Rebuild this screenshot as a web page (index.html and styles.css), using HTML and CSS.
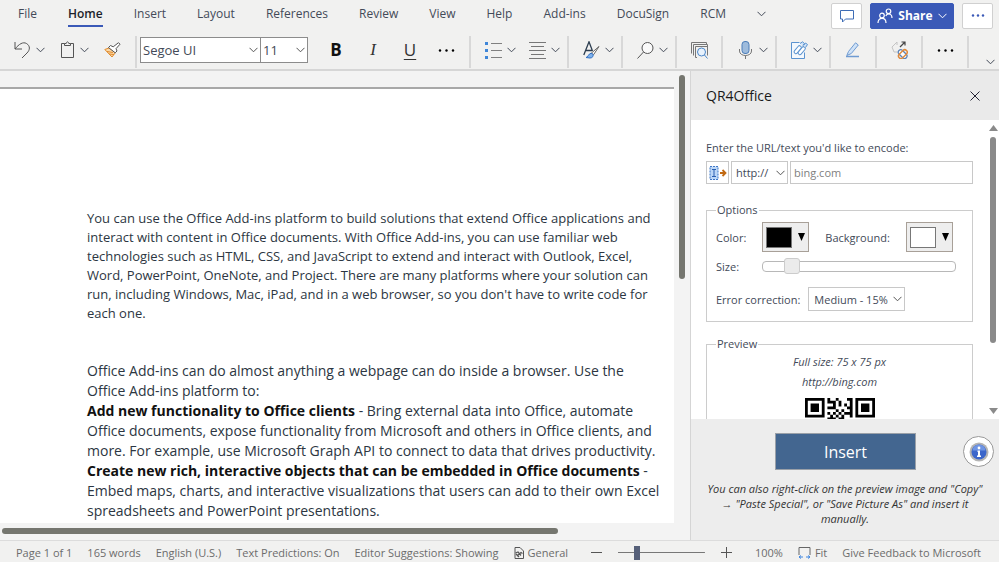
FILE: index.html
```
<!DOCTYPE html>
<html lang="en">
<head>
  <meta charset="UTF-8">
  <title>QR4Office</title>
  <link rel="stylesheet" href="styles.css">
</head>
<body>

  <!-- Shared icons -->
  <svg class="defs" width="0" height="0">
    <symbol id="chev" viewBox="0 0 9 6"><path d="M.5 .8 4.5 4.8 8.5 .8" fill="none" stroke="currentColor"/></symbol>
    <symbol id="dots" viewBox="0 0 17 5"><circle cx="2" cy="2.5" r="1.2"/><circle cx="8.5" cy="2.5" r="1.2"/><circle cx="15" cy="2.5" r="1.2"/></symbol>
  </svg>

  <!-- Ribbon -->
  <header>
    <div class="tabs-row">
      <nav class="tabs">
        <a href="#">File</a>
        <a href="#" class="active">Home</a>
        <a href="#">Insert</a>
        <a href="#">Layout</a>
        <a href="#">References</a>
        <a href="#">Review</a>
        <a href="#">View</a>
        <a href="#">Help</a>
        <a href="#">Add-ins</a>
        <a href="#">DocuSign</a>
        <a href="#">RCM</a>
        <button aria-label="More tabs"><svg class="chev"><use href="#chev"/></svg></button>
      </nav>
      <div class="actions">
        <button class="action" aria-label="Comments">
          <svg width="16" height="14" viewBox="0 0 16 14" fill="none" stroke="#3f6db5"><path d="M1.5 1.5h13v8.500H6.500L3.500 13v-3h-2z"/></svg>
        </button>
        <button class="action share">
          <svg width="16" height="16" viewBox="0 0 16 16" fill="none" stroke="#fff" stroke-width="1.200"><circle cx="5" cy="7.500" r="2.300"/><path d="M1 15c0-3 1.500-4.700 4-4.700S9 12 9 15"/><circle cx="11.500" cy="3.300" r="2.300"/><path d="M8.800 8c.5-1.300 1.400-2 2.700-2 2 0 3.500 1.500 3.500 4"/></svg>
          Share
          <svg class="chev"><use href="#chev"/></svg>
        </button>
        <button class="action dots" aria-label="More options">
          <svg width="14" height="3"><circle cx="2" cy="1.500" r="1.200"/><circle cx="7" cy="1.500" r="1.200"/><circle cx="12" cy="1.500" r="1.200"/></svg>
        </button>
      </div>
    </div>

    <div class="toolbar">
      <div class="group first">
        <button aria-label="Undo">
          <svg width="17" height="18" viewBox="0 0 17 18" fill="none" stroke="#555"><path d="M1 1v7h7M1 8C5 3 9 .5 12.500 2.500c4 2.500 3.500 6.500.5 9.500l-5 5"/></svg>
          <svg class="chev"><use href="#chev"/></svg>
        </button>
        <button aria-label="Paste">
          <svg width="15" height="18" viewBox="0 0 15 18" fill="none" stroke="#555"><path d="M4.500 2.500h-3v14h12v-14h-3"/><path d="M4.500 4.500v-2h1.700C6.500.3 8.500.3 8.800 2.500h1.700v2z"/></svg>
          <svg class="chev"><use href="#chev"/></svg>
        </button>
        <button aria-label="Format painter">
          <svg width="17" height="16" viewBox="0 0 17 16" fill="none" stroke="#555"><path d="M.8 7.500 5 6l6.500 4.500L8 15z" fill="#fbd9a8" stroke="#e08a2c"/><path d="M3 9.500l6 1M5 12l5 .5" stroke="#e08a2c"/><path d="M4.500 5.500l2-2 2.700 1.300L14.500.7l1.500 1.500-4 4.500 1 2.300-1.800 1.800z" fill="#fff"/></svg>
        </button>
      </div>

      <div class="group fonts">
        <div class="combos">
          <select class="font-name" aria-label="Font"><option>Segoe UI</option></select>
          <select class="font-size" aria-label="Font size"><option>11</option></select>
        </div>
        <button class="letter bold" aria-label="Bold">B</button>
        <button class="letter italic" aria-label="Italic">I</button>
        <button class="letter underline" aria-label="Underline">U</button>
        <button aria-label="More font options"><svg width="17" height="5"><use href="#dots"/></svg></button>
      </div>

      <div class="group pair">
        <button aria-label="Bullets">
          <svg width="17" height="17" viewBox="0 0 17 17"><path d="M0 0h3v3H0zM0 7h3v3H0zM0 14h3v3H0z" fill="#3f86d8"/><path d="M6 1.500h11M6 8.500h11M6 15.500h11" stroke="#808080"/></svg>
          <svg class="chev"><use href="#chev"/></svg>
        </button>
        <button aria-label="Alignment">
          <svg width="17" height="17" viewBox="0 0 17 17"><path d="M0 .5h17M2 4.500h13M0 8.500h17M2 12.500h13M0 16.500h17" stroke="#777"/></svg>
          <svg class="chev"><use href="#chev"/></svg>
        </button>
      </div>

      <div class="group">
        <button aria-label="Styles">
          <svg width="17" height="18" viewBox="0 0 17 18" fill="none" stroke="#2d3e50"><path d="M.8 14 6 .8 9.500 10M3 9.500h6" stroke-width="1.300"/><path d="M16 5.500 8.500 12l2 1.800z" fill="#fff" stroke="#666"/><path d="M3 16.500c2 0 2.500-4 5-4.200 3 0 3 4.700-1 4.700z" fill="#7fb2ec" stroke="#2f6fc4"/></svg>
          <svg class="chev"><use href="#chev"/></svg>
        </button>
      </div>
      <div class="group">
        <button aria-label="Find">
          <svg width="17" height="17" viewBox="0 0 17 17" fill="none" stroke="#555"><circle cx="10.500" cy="6" r="5.500" fill="#fafafa"/><path d="M6.500 10 .5 16.500"/></svg>
          <svg class="chev"><use href="#chev"/></svg>
        </button>
      </div>
      <div class="group single">
        <button aria-label="Reuse files">
          <svg width="17" height="17" viewBox="0 0 17 17" fill="none" stroke="#777"><path d="M.5 11.500V.5h15v2M2.500 13.500v-11h14v3M6 15.500H4.500v-11h12v9"/><circle cx="10.500" cy="10" r="4" fill="#e8f2fc" stroke="#4a86c9"/><path d="m13.500 13 3 3.500" stroke="#4a86c9"/></svg>
        </button>
      </div>
      <div class="group">
        <button aria-label="Dictate">
          <svg width="17" height="18" viewBox="0 0 17 18" fill="none" stroke="#777"><rect x="5" y=".5" width="7" height="12" rx="3" fill="#9dbbdc" stroke="#4b7db8"/><path d="M2.500 8v2c0 6 12 6 12 0V8M8.500 14.500V18"/></svg>
          <svg class="chev"><use href="#chev"/></svg>
        </button>
      </div>
      <div class="group">
        <button aria-label="Editor">
          <svg width="17" height="18" viewBox="0 0 17 18" fill="none" stroke="#5a93d0"><path d="M8.500 1.500h-8v16h13v-6" fill="#f3f8fd"/><rect x="2" y="7" width="9" height="3.500" rx="1.500" transform="rotate(-50 6.500 8.500)" fill="#fff"/><rect x="6" y="8" width="9" height="3.500" rx="1.500" transform="rotate(-50 10.500 9.500)" fill="#fff"/><path d="M9 2.500 11.500.8l2 1.700-1.700 2M12.500 4.500l2-2.500 2 1.500-2 3" fill="#cfe2f7"/></svg>
          <svg class="chev"><use href="#chev"/></svg>
        </button>
      </div>
      <div class="group single">
        <button aria-label="Draw">
          <svg width="17" height="16" viewBox="0 0 17 16" fill="none" stroke="#6f9bd2"><path d="M3.500 9.500 10.500.8l2.800 2.200L6.300 11.500l-4.500 2z" fill="#cfe2f7"/><path d="M1 14.500h13" stroke-width="1.500"/></svg>
        </button>
      </div>
      <div class="group single">
        <button aria-label="QR4Office">
          <svg width="17" height="18" viewBox="0 0 17 18" fill="none"><path d="M6 1 1 6l2 5h3M6 1v3" stroke="#c4c4c4"/><path d="M9 6l5-5M10.500 1h3.500v3.500" stroke="#444" stroke-width="1.200"/><path d="M8 9.500a2.500 2.500 0 0 1 3.500 0l4 4a2.500 2.500 0 0 1-3.500 3.500l-4-4a2.500 2.500 0 0 1 0-3.500z" fill="#fff" stroke="#5b84b8" stroke-width="1.300"/><path d="M15.500 9.500a2.500 2.500 0 0 0-3.500 0l-4 4a2.500 2.500 0 0 0 3.500 3.500l4-4a2.500 2.500 0 0 0 0-3.500z" stroke="#e08a3c" stroke-width="1.500"/></svg>
        </button>
      </div>
      <div class="group single">
        <button aria-label="More commands"><svg width="17" height="5"><use href="#dots"/></svg></button>
      </div>
      <button class="collapse" aria-label="Collapse ribbon"><svg class="chev"><use href="#chev"/></svg></button>
    </div>
  </header>

  <main>
    <!-- Document -->
    <section class="editor">
      <div class="view">
        <article class="page">
          <p class="intro">You can use the Office Add-ins platform to build solutions that extend Office applications and<br>
          interact with content in Office documents. With Office Add-ins, you can use familiar web<br>
          technologies such as HTML, CSS, and JavaScript to extend and interact with Outlook, Excel,<br>
          Word, PowerPoint, OneNote, and Project. There are many platforms where your solution can<br>
          run, including Windows, Mac, iPad, and in a web browser, so you don't have to write code for<br>
          each one.</p>
          <p class="body-text">Office Add-ins can do almost anything a webpage can do inside a browser. Use the<br>
          Office Add-ins platform to:<br>
          <b>Add new functionality to Office clients</b> - Bring external data into Office, automate<br>
          Office documents, expose functionality from Microsoft and others in Office clients, and<br>
          more. For example, use Microsoft Graph API to connect to data that drives productivity.<br>
          <b>Create new rich, interactive objects that can be embedded in Office documents</b> -<br>
          Embed maps, charts, and interactive visualizations that users can add to their own Excel<br>
          spreadsheets and PowerPoint presentations.</p>
        </article>
        <div class="vscroll"><div class="thumb"></div></div>
      </div>
      <div class="hscroll"><div class="thumb"></div></div>
    </section>

    <!-- Add-in task pane -->
    <aside class="pane">
      <div class="pane-head">
        <h1>QR4Office</h1>
        <button aria-label="Close">
          <svg width="10" height="10" viewBox="0 0 10 10" stroke="#223" fill="none"><path d="m.5.5 9 9M9.500.5l-9 9"/></svg>
        </button>
      </div>

      <div class="pane-body">
        <form class="form">
          <label for="url">Enter the URL/text you'd like to encode:</label>
          <div class="url-row">
            <button type="button" class="insert-text" aria-label="Use selected text">
              <svg width="18" height="14" viewBox="0 0 18 14" fill="none"><rect x="1" y=".5" width="8" height="13" fill="#bcd7f7" stroke="#3f78c9" stroke-dasharray="2 1"/><path d="M3 3.500h4M5 3.500v7M3 10.500h4" stroke="#2a5fb0"/><path d="M11 7h5M13.500 4 16.500 7l-3 3" stroke="#c26a14" stroke-width="1.800"/></svg>
            </button>
            <select class="scheme" aria-label="Scheme"><option>http://</option></select>
            <input id="url" type="text" placeholder="bing.com">
          </div>

          <fieldset class="options">
            <legend>Options</legend>
            <div class="row colors">
              <label for="color">Color:</label>
              <button type="button" id="color" class="swatch"><span class="chip black"></span><svg width="7" height="8"><path d="M0 0h7L3.500 8z"/></svg></button>
              <label for="bg">Background:</label>
              <button type="button" id="bg" class="swatch"><span class="chip"></span><svg width="7" height="8"><path d="M0 0h7L3.500 8z"/></svg></button>
            </div>
            <div class="row size">
              <label for="size">Size:</label>
              <input id="size" type="range" min="0" max="100" value="12">
            </div>
            <div class="row correction">
              <label for="ec">Error correction:</label>
              <select id="ec"><option>Medium - 15%</option></select>
            </div>
          </fieldset>

          <fieldset class="preview">
            <legend>Preview</legend>
            <p>Full size: 75 x 75 px</p>
            <p>http://bing.com</p>
            <svg class="qr" width="70" height="70" viewBox="0 0 25 25">
              <path d="M0 0h7v7H0zM18 0h7v7h-7zM0 18h7v7H0z"/>
              <path d="M1 1h5v5H1zM19 1h5v5h-5zM1 19h5v5H1z" fill="#fff"/>
              <path d="M2 2h3v3H2zM20 2h3v3h-3zM2 20h3v3H2z"/>
              <path d="M8 0h1v2H8zM11 0h1v1h-1zM15 0h2v1h-2zM9 1h2v1H9zM12 1h1v2h-1zM16 1h1v2h-1zM8 3h3v1H8zM10 2h1v1h-1zM14 2h1v1h-1zM15 3h2v1h-2zM16 4h1v3h-1zM11 4h1v1h-1zM13 4h1v1h-1zM14 5h2v1h-2zM8 5h1v1H8zM10 5h1v1h-1zM12 5h1v1h-1zM9 6h1v1H9zM11 6h1v1h-1zM13 6h1v1h-1zM8 7h3v1H8zM12 7h2v1h-2z"/>
            </svg>
          </fieldset>
        </form>
        <div class="pane-scroll">
          <svg width="9" height="7"><path d="M0 7 4.500 1 9 7z" fill="#8a8a8a"/></svg>
          <div class="track"><div class="thumb"></div></div>
          <svg width="9" height="7"><path d="M0 0 4.500 6 9 0z" fill="#8a8a8a"/></svg>
        </div>
      </div>

      <div class="pane-foot">
        <div class="insert-row">
          <button class="insert">Insert</button>
          <button class="info" aria-label="Information">
            <svg width="20" height="20" viewBox="0 0 20 20"><circle cx="10" cy="10" r="9.500" fill="#b4b4b4"/><circle cx="10" cy="10" r="7.500" fill="#3c66ca"/><path d="M3.500 8.500a6.500 6 0 0 1 13 0z" fill="#6f95e4"/><circle cx="10" cy="6" r="1.400" fill="#fff"/><path d="M8.500 8.500H11v5h1V15H8v-1.500h1V10h-.5z" fill="#fff"/></svg>
          </button>
        </div>
        <p>You can also right-click on the preview image and "Copy"<br>→ "Paste Special", or "Save Picture As" and insert it<br>manually.</p>
      </div>
    </aside>
  </main>

  <!-- Status bar -->
  <footer>
    <span>Page 1 of 1</span>
    <span>165 words</span>
    <span>English (U.S.)</span>
    <span>Text Predictions: On</span>
    <span>Editor Suggestions: Showing</span>
    <span class="with-icon">
      <svg width="10" height="12" viewBox="0 0 10 12" fill="none" stroke="#555"><path d="M1 .5h5L9.500 4v7.500H1z"/><path d="M1.500 6 4 5l3 3.500M3 9l4-3.500 1.500 1M2 7l3 3" stroke-width="1.200"/></svg>
      General
    </span>
    <div class="zoom">
      <button aria-label="Zoom out"><svg width="11" height="11"><path d="M0 5.500h11" stroke="#555"/></svg></button>
      <input type="range" aria-label="Zoom" min="0" max="100" value="20">
      <button aria-label="Zoom in"><svg width="11" height="11"><path d="M0 5.500h11M5.500 0v11" stroke="#555"/></svg></button>
      <span>100%</span>
    </div>
    <span class="with-icon">
      <svg width="13" height="12" viewBox="0 0 13 12" fill="none"><path d="M1 8V.5h11V8" stroke="#666"/><path d="M1 10h4M8 10h4M3 8.500 1 10l2 1.500M10 8.500l2 1.500-2 1.500" stroke="#3f86e0"/></svg>
      Fit
    </span>
    <a href="#">Give Feedback to Microsoft</a>
  </footer>

</body>
</html>
```
FILE: styles.css
```
* {
  box-sizing: border-box;
}

html, body {
  margin: 0;
  height: 100%;
}

body {
  display: flex;
  flex-direction: column;
  overflow: hidden;
  background: #f3f3f3;
  color: #434a58;
  font-family: "Open Sans", "Noto Sans", sans-serif;
  font-size: 12px;
}

button, select, input {
  margin: 0;
  padding: 0;
  border: 0;
  background: none;
  color: inherit;
  font: inherit;
}

button {
  display: flex;
  align-items: center;
  justify-content: center;
}

a {
  color: inherit;
  text-decoration: none;
}

p {
  margin: 0;
}

svg {
  display: block;
  flex: none;
}

.defs {
  position: absolute;
}

.chev {
  width: 9px;
  height: 6px;
}

select {
  appearance: none;
  border: 1px solid #c8c8c8;
  border-radius: 0;
  background: #fff url("data:image/svg+xml,%3Csvg xmlns='http://www.w3.org/2000/svg' width='9' height='6'%3E%3Cpath d='M.5 .8 4.5 4.8 8.5 .8' fill='none' stroke='%23555'/%3E%3C/svg%3E") no-repeat right 2px center;
}

/* Ribbon */
header {
  background: #f1f1f0;
  border-bottom: 2px solid #d6d6d6;
}

.tabs-row {
  display: flex;
  justify-content: space-between;
  height: 32px;
  padding: 0 6px 0 18px;
}

.tabs {
  display: flex;
  align-items: center;
  gap: 31px;
  height: 27px;
}

.tabs a {
  height: 27px;
  line-height: 28px;
}

.tabs .active {
  border-bottom: 2px solid #3a59b7;
  color: #1b1f2a;
  font-weight: 600;
}

.actions {
  display: flex;
  align-items: center;
  gap: 8px;
  padding-top: 2px;
  height: 29px;
}

.action {
  gap: 5px;
  width: 31px;
  height: 26px;
  border: 1px solid #d0d0d0;
  border-radius: 2px;
  background: #fff;
}

.share {
  width: 84px;
  border-color: #3a59b7;
  background: #3a59b7;
  color: #fff;
  font-weight: 700;
}

.dots {
  fill: #3a59b7;
}

.toolbar {
  display: flex;
  height: 37px;
  padding: 4px 4px 1px 0;
}

.group {
  display: flex;
  align-items: center;
  padding: 0 7px 4px 14px;
  border-right: 2px solid #d8d8d8;
}

.group button {
  gap: 5px;
}

.group.first {
  gap: 15px;
  padding-right: 14px;
}

.group.single {
  padding-right: 13px;
}

.group.fonts {
  gap: 19px;
  padding-right: 14px;
  padding-left: 3px;
}

.group.pair {
  gap: 13px;
}

.combos {
  display: flex;
}

.combos select {
  height: 26px;
  padding-left: 2px;
  border-color: #8c8c8c;
  font-size: 13px;
}

.font-name {
  width: 121px;
}

.font-size {
  width: 48px;
  margin-left: -1px;
}

.letter {
  width: 18px;
  color: #333;
  font-size: 17px;
  line-height: 20px;
}

.bold {
  color: #111;
  font-weight: 700;
}

.italic {
  font-family: "Liberation Serif", serif;
  font-style: italic;
}

.underline {
  text-decoration: underline;
  text-underline-offset: 3px;
  text-decoration-thickness: 1px;
}

.collapse {
  align-self: flex-end;
  margin-left: auto;
  height: 13px;
}

/* Document */
main {
  display: flex;
  flex: 1;
  min-height: 0;
}

.editor {
  display: flex;
  flex: 1;
  flex-direction: column;
  min-width: 0;
}

.view {
  display: flex;
  flex: 1;
  min-height: 0;
}

.page {
  flex: 1;
  min-width: 0;
  margin-top: 16px;
  padding: 120px 0 0 87px;
  border-top: 2px solid #a8a8a8;
  background: #fff;
  color: #2c3642;
  white-space: nowrap;
  overflow: hidden;
}

.intro {
  margin-bottom: 38px;
  font-size: 13px;
  line-height: 19px;
}

.body-text {
  font-size: 14px;
  line-height: 20px;
}

.body-text b {
  color: #111;
}

.vscroll {
  width: 16px;
  padding: 4px 5px;
}

.vscroll .thumb {
  height: 46%;
  border-radius: 3px;
  background: #75766f;
}

.hscroll {
  height: 17px;
  padding: 5px 2px;
}

.hscroll .thumb {
  width: 81%;
  height: 6px;
  border-radius: 3px;
  background: #75766f;
}

/* Task pane */
.pane {
  display: flex;
  flex-direction: column;
  width: 309px;
  border-left: 1px solid #d5d5d5;
  background: #ededed;
  font-size: 11px;
}

.pane-head {
  display: flex;
  align-items: center;
  justify-content: space-between;
  height: 49px;
  padding: 0 19px 0 15px;
  background: #eaeaea;
}

h1 {
  margin: 0;
  color: #1a1a1a;
  font-size: 14px;
  font-weight: 400;
}

.pane-body {
  display: flex;
  flex: 1;
  min-height: 0;
  background: #fff;
}

.form {
  flex: 1;
  min-width: 0;
  padding: 20px 14px 0 15px;
  overflow: hidden;
}

.form > label {
  display: block;
  line-height: 16px;
}

.url-row {
  display: flex;
  gap: 2px;
  margin: 5px 0 19px;
}

.url-row > * {
  height: 23px;
  border: 1px solid #c8c8c8;
}

.insert-text {
  width: 23px;
}

.scheme {
  width: 57px;
  padding-left: 4px;
}

#url {
  flex: 1;
  min-width: 0;
  padding: 0 3px;
}

#url::placeholder {
  color: #808080;
}

fieldset {
  min-width: 0;
  margin: 0;
  border: 1px solid #ccc;
}

legend {
  padding: 0 1px;
  line-height: 14px;
}

.options {
  margin-bottom: 15px;
  padding: 5px 16px 10px 9px;
}

.preview {
  padding: 1px 9px 10px;
}

.row {
  display: flex;
  align-items: center;
}

.colors {
  gap: 16px;
}

.swatch {
  flex: none;
  gap: 6px;
  width: 47px;
  height: 30px;
  border: 1px solid #a8a098;
  background: #eee;
}

.chip {
  width: 26px;
  height: 21px;
  border: 1px solid #777;
  background: #fff;
}

.black {
  background: #000;
}

.size {
  gap: 23px;
  height: 28px;
}

#size {
  flex: 1;
  appearance: none;
  height: 11px;
  border: 1px solid #b8b8b8;
  border-radius: 4px;
  background: #fff;
}

#size::-webkit-slider-thumb {
  appearance: none;
  width: 16px;
  height: 16px;
  border: 1px solid #ccc;
  border-radius: 3px;
  background: #ebebeb;
}

.correction {
  gap: 8px;
  margin-top: 7px;
}

#ec {
  width: 97px;
  height: 24px;
  padding-left: 5px;
}

.preview p {
  font-style: italic;
  line-height: 20px;
  text-align: center;
}

.qr {
  margin: 6px auto 0;
}

.pane-scroll {
  display: flex;
  flex-direction: column;
  align-items: center;
  width: 12px;
  padding: 4px 0;
}

.track {
  flex: 1;
  padding-top: 6px;
}

.track .thumb {
  width: 6px;
  height: 76%;
  border-radius: 3px;
  background: #8a8a8a;
}

.pane-foot {
  padding: 14px 5px 14px 15px;
}

.insert-row {
  display: flex;
  align-items: center;
  justify-content: flex-end;
  gap: 47px;
}

.insert {
  width: 141px;
  height: 37px;
  border: 1px solid #9aa0a8;
  background: #436690;
  color: #fff;
  font-size: 16px;
}

.info {
  width: 31px;
  height: 31px;
  border: 1px solid #999;
  border-radius: 50%;
  background: #fff;
}

.pane-foot p {
  margin: 11px 10px 0 0;
  color: #333;
  font-style: italic;
  line-height: 15px;
  text-align: center;
  white-space: nowrap;
}

/* Status bar */
footer {
  display: flex;
  align-items: center;
  gap: 15px;
  height: 22px;
  padding: 2px 18px 0 16px;
  border-top: 1px solid #dcdcdc;
  background: #f1f1f0;
  color: #6c6c6c;
  font-size: 11px;
  white-space: nowrap;
}

.with-icon {
  display: flex;
  align-items: center;
  gap: 4px;
}

.zoom {
  display: flex;
  flex: 1;
  align-items: center;
  gap: 16px;
  min-width: 0;
  padding-left: 8px;
}

.zoom span {
  margin-left: 7px;
}

.zoom input {
  flex: 1;
  min-width: 0;
  appearance: none;
  height: 14px;
  background: linear-gradient(#777, #777) no-repeat center / 100% 1px;
}

.zoom input::-webkit-slider-thumb {
  appearance: none;
  width: 6px;
  height: 14px;
  background: #566079;
}
```
